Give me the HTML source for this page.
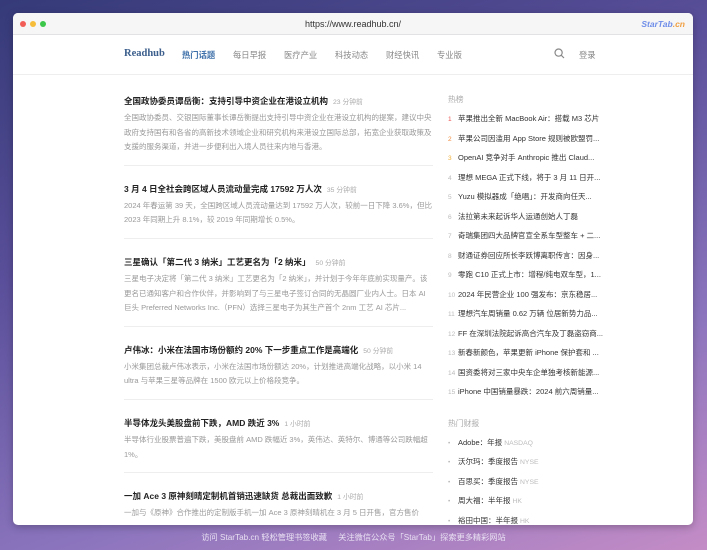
<!DOCTYPE html>
<html><head><meta charset="utf-8"><style>
*{margin:0;padding:0;box-sizing:border-box}
body{width:707px;height:550px;overflow:hidden;font-family:"Liberation Sans","Noto Sans CJK SC",sans-serif;
background:linear-gradient(160deg,#353a78 0%,#5a4f9a 35%,#8a74bd 70%,#c48cc6 100%);position:relative}
.win{position:absolute;left:13px;top:13px;width:680px;height:512px;background:#fff;border-radius:5px;overflow:hidden;box-shadow:0 2px 8px rgba(0,0,0,.25)}
.tb{height:22px;background:#f6f6f7;border-bottom:1px solid #e2e2e4;position:relative;font-size:9px;color:#333;text-align:center;line-height:22px}
.dot{position:absolute;top:8px;width:6px;height:6px;border-radius:50%}
.st{position:absolute;right:8px;top:0;font-style:italic;font-weight:bold;font-size:8.5px;color:#6f8ee8}
.st b{color:#f0a040}
.nav{height:40px;border-bottom:1px solid #eee;position:relative;font-size:8.3px;color:#888}
.nav span{position:absolute;top:14px}
.logo{font-family:"Liberation Serif",serif;font-weight:bold;font-size:10.5px;color:#3b5e8c;top:13px!important}
.main{position:absolute;left:111px;top:80px;width:309px}
.it{border-bottom:1px solid #eee;padding-bottom:10px;margin-bottom:15px}
.t{font-size:8.5px;font-weight:bold;color:#222;height:16px;line-height:16px;margin-bottom:2px;white-space:nowrap}
.t i{font-style:normal;font-weight:normal;font-size:6.8px;color:#aaa;margin-left:5px}
.d{font-size:7.5px;color:#999;line-height:14.6px}
.side{position:absolute;left:435px;top:80px;width:160px;font-size:7.5px;color:#333}
.h{color:#aaa;font-size:7.8px;height:14px;line-height:14px;margin-bottom:5px}
.r{height:19.5px;line-height:14px;white-space:nowrap;overflow:hidden}
.r em{font-style:normal;display:inline-block;width:10px;color:#bbb;font-size:6.5px}
.r s{text-decoration:none;color:#bbb;font-size:6.8px;margin-left:2px}
.foot{position:absolute;top:531px;left:0;width:707px;text-align:center;font-size:8.2px;color:#e8e0f2}
</style></head><body>
<div class="win">
<div class="tb"><div class="dot" style="left:7px;background:#f25e57"></div><div class="dot" style="left:17px;background:#f6bd3b"></div><div class="dot" style="left:27px;background:#3cc74a"></div>https://www.readhub.cn/<span class="st">StarTab<b>.cn</b></span></div>
<div class="nav">
<span class="logo" style="left:111px">Readhub</span>
<span style="left:169px;color:#3b6ea8;font-weight:bold">热门话题</span>
<span style="left:220px">每日早报</span>
<span style="left:271px">医疗产业</span>
<span style="left:322px">科技动态</span>
<span style="left:373px">财经快讯</span>
<span style="left:424px">专业版</span>
<span style="left:541px;top:13px"><svg width="11" height="11" viewBox="0 0 11 11"><circle cx="4.6" cy="4.6" r="3.6" fill="none" stroke="#888" stroke-width="1.2"/><line x1="7.3" y1="7.3" x2="10" y2="10" stroke="#888" stroke-width="1.2"/></svg></span>
<span style="left:566px">登录</span>
</div>
<div class="main">
<div class="it"><div class="t">全国政协委员谭岳衡：支持引导中资企业在港设立机构<i>23 分钟前</i></div><div class="d">全国政协委员、交银国际董事长谭岳衡提出支持引导中资企业在港设立机构的提案，建议中央政府支持国有和各省的高新技术领域企业和研究机构来港设立国际总部，拓宽企业获取政策及支援的服务渠道，并进一步便利出入境人员往来内地与香港。</div></div>
<div class="it"><div class="t">3 月 4 日全社会跨区域人员流动量完成 17592 万人次<i>35 分钟前</i></div><div class="d">2024 年春运第 39 天，全国跨区域人员流动量达到 17592 万人次，较前一日下降 3.6%，但比 2023 年同期上升 8.1%，较 2019 年同期增长 0.5%。</div></div>
<div class="it"><div class="t">三星确认「第二代 3 纳米」工艺更名为「2 纳米」<i>50 分钟前</i></div><div class="d">三星电子决定将「第二代 3 纳米」工艺更名为「2 纳米」，并计划于今年年底前实现量产。该更名已通知客户和合作伙伴，并影响到了与三星电子签订合同的无晶圆厂业内人士。日本 AI 巨头 Preferred Networks Inc.（PFN）选择三星电子为其生产首个 2nm 工艺 AI 芯片...</div></div>
<div class="it"><div class="t">卢伟冰：小米在法国市场份额约 20% 下一步重点工作是高端化<i>50 分钟前</i></div><div class="d">小米集团总裁卢伟冰表示，小米在法国市场份额达 20%，计划推进高端化战略，以小米 14 ultra 与苹果三星等品牌在 1500 欧元以上价格段竞争。</div></div>
<div class="it"><div class="t">半导体龙头美股盘前下跌，AMD 跌近 3%<i>1 小时前</i></div><div class="d">半导体行业股票普遍下跌，美股盘前 AMD 跌幅近 3%，英伟达、英特尔、博通等公司跌幅超 1%。</div></div>
<div class="it"><div class="t">一加 Ace 3 原神刻晴定制机首销迅速缺货 总裁出面致歉<i>1 小时前</i></div><div class="d">一加与《原神》合作推出的定制版手机一加 Ace 3 原神刻晴机在 3 月 5 日开售，官方售价</div></div>
</div>
<div class="side">
<div class="h">热榜</div>
<div class="r"><em style="color:#e55">1</em>苹果推出全新 MacBook Air：搭载 M3 芯片</div>
<div class="r"><em style="color:#f08a3c">2</em>苹果公司因滥用 App Store 规则被欧盟罚...</div>
<div class="r"><em style="color:#f0b03c">3</em>OpenAI 竞争对手 Anthropic 推出 Claud...</div>
<div class="r"><em>4</em>理想 MEGA 正式下线，将于 3 月 11 日开...</div>
<div class="r"><em>5</em>Yuzu 模拟器成「绝唱」：开发商向任天...</div>
<div class="r"><em>6</em>法拉第未来起诉华人运通创始人丁磊</div>
<div class="r"><em>7</em>奇瑞集团四大品牌官宣全系车型整车 + 二...</div>
<div class="r"><em>8</em>财通证券回应所长李跃博离职传言：因身...</div>
<div class="r"><em>9</em>零跑 C10 正式上市：增程/纯电双车型，1...</div>
<div class="r"><em>10</em>2024 年民营企业 100 强发布：京东稳居...</div>
<div class="r"><em>11</em>理想汽车周销量 0.62 万辆 位居新势力品...</div>
<div class="r"><em>12</em>FF 在深圳法院起诉高合汽车及丁磊盗窃商...</div>
<div class="r"><em>13</em>新春新颜色，苹果更新 iPhone 保护套和 ...</div>
<div class="r"><em>14</em>国资委将对三家中央车企单独考核新能源...</div>
<div class="r"><em>15</em>iPhone 中国销量暴跌：2024 前六周销量...</div>
<div class="h" style="margin-top:12px">热门财报</div>
<div class="r"><em>•</em>Adobe：年报<s>NASDAQ</s></div>
<div class="r"><em>•</em>沃尔玛：季度报告<s>NYSE</s></div>
<div class="r"><em>•</em>百思买：季度报告<s>NYSE</s></div>
<div class="r"><em>•</em>周大福：半年报<s>HK</s></div>
<div class="r"><em>•</em>裕田中国：半年报<s>HK</s></div>
</div>
</div>
<div class="foot">访问 StarTab.cn 轻松管理书签收藏 &nbsp;&nbsp;&nbsp; 关注微信公众号「StarTab」探索更多精彩网站</div>
</body></html>
